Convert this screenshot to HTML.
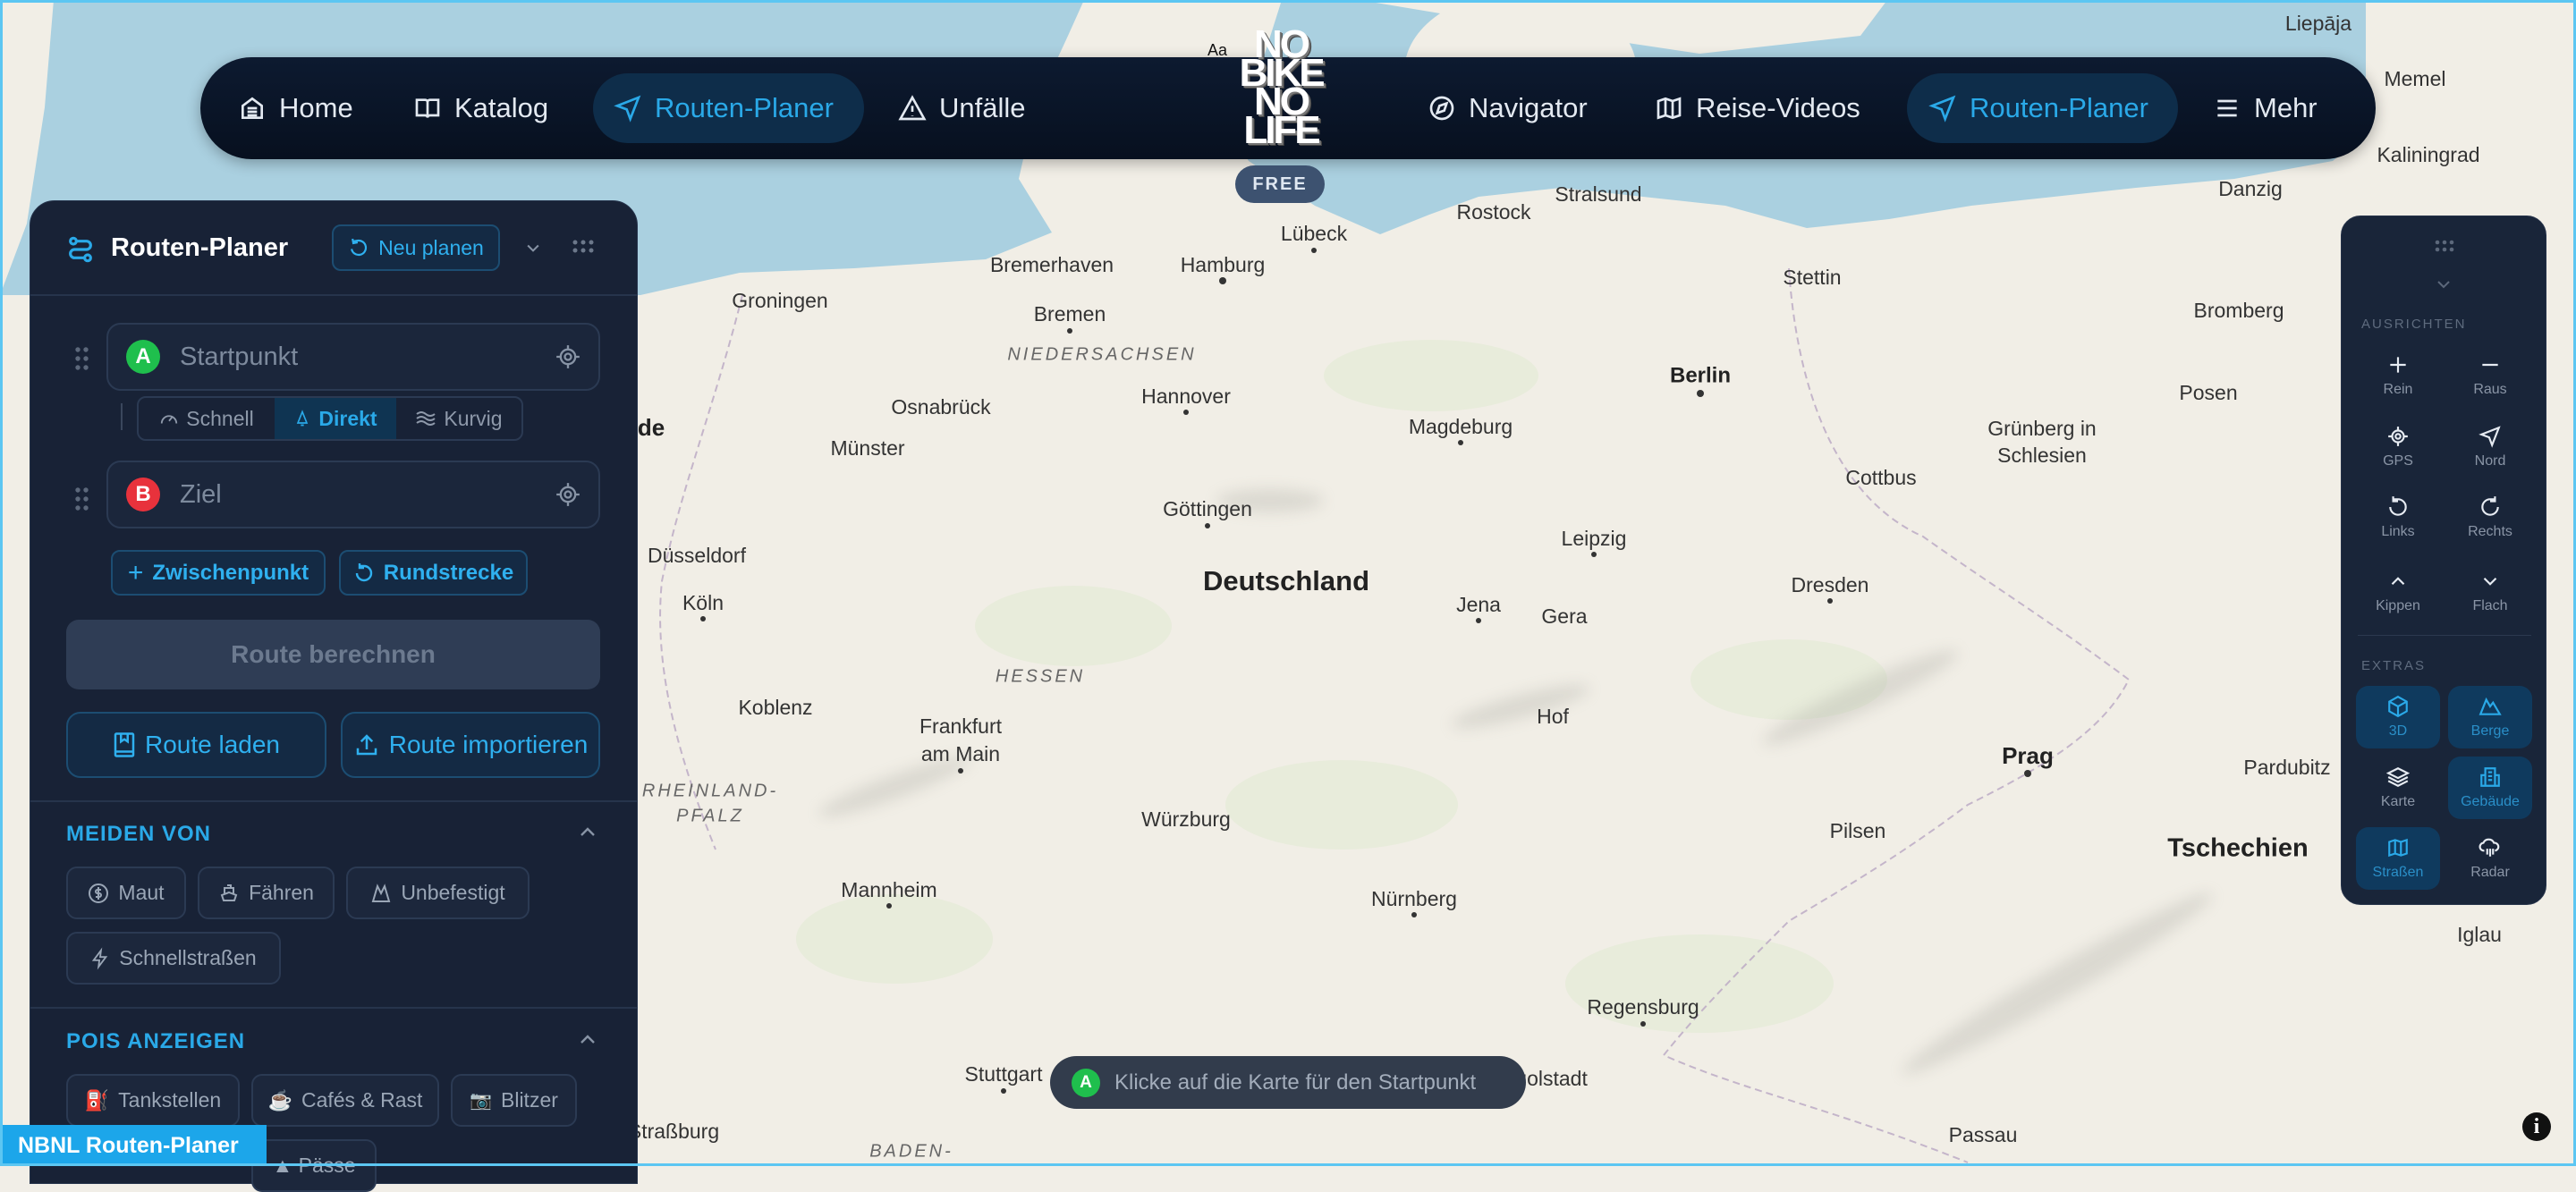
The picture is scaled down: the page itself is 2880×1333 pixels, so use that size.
<!DOCTYPE html>
<html><head><meta charset="utf-8"><style>
*{box-sizing:border-box;margin:0;padding:0}
body{width:2880px;height:1304px;overflow:hidden;position:relative;font-family:"Liberation Sans",sans-serif;background:#f1eee7}
.abs{position:absolute}
svg.map{position:absolute;left:0;top:0}
.nav{left:224px;top:64px;width:2432px;height:114px;border-radius:57px;background:linear-gradient(#0d1a30,#07101f);box-shadow:0 4px 16px rgba(0,0,0,.3)}
.ni{position:absolute;top:0;height:114px;display:flex;align-items:center;gap:14px;color:#e3e9f1;font-size:31px}
.ni svg{width:32px;height:32px;fill:none;stroke:currentColor;stroke-width:2}
.pill{position:absolute;top:18px;height:78px;border-radius:39px;background:#0e2d4a}
.act{color:#2aa9e8}
.panel{left:33px;top:224px;width:680px;height:1100px;border-radius:28px 28px 0 0;background:#182236;border:1px solid #26344c}
.inp{position:absolute;left:85px;width:552px;height:76px;border-radius:16px;border:2px solid #2b3a53;background:#1b263b;display:flex;align-items:center}
.badge{width:38px;height:38px;border-radius:19px;color:#fff;font-weight:bold;font-size:24px;display:flex;align-items:center;justify-content:center;margin-left:20px;margin-right:22px}
.ph{color:#7d8a9d;font-size:29px}
.btn{position:absolute;border:2px solid #1c4d72;background:#142a44;border-radius:10px;color:#2fb0ef;font-size:24px;display:flex;align-items:center;justify-content:center;gap:10px}
.chip{position:absolute;height:59px;border:2px solid #2b3a53;background:#1c273c;border-radius:12px;color:#9aa6b6;font-size:23px;display:flex;align-items:center;justify-content:center;gap:10px}
.sec{position:absolute;left:40px;color:#2aa9e8;font-size:24px;font-weight:bold;letter-spacing:1px}
.hr{position:absolute;left:0;width:678px;height:2px;background:#26344c}
.rp{left:2617px;top:241px;width:230px;height:771px;border-radius:22px;background:#192539;border:1px solid #27344b}
.rl{position:absolute;color:#5e6b7e;font-size:15px;letter-spacing:2px}
.ri{position:absolute;width:94px;text-align:center;color:#8a95a6;font-size:16px}
.ri svg{display:block;margin:0 auto 6px;width:26px;height:26px;fill:none;stroke:#e6ebf2;stroke-width:2}
.tile{position:absolute;width:94px;height:70px;border-radius:14px}
.tile.on{background:#0f3a5e}
.tile.on svg{stroke:#2aa9e8}
.tile.on div{color:#2a8fc8}
</style></head><body>
<svg class="map" width="2880" height="1304" viewBox="0 0 2880 1304">
<rect width="2880" height="1304" fill="#f1eee6"/>
<rect width="2880" height="340" fill="#aad0e0"/>
<path d="M0 330L716 330L827 305L955 300L1102 290L1176 260L1139 200L1157 120L1194 40L1212 0L1433 0L1414 60L1359 120L1396 180L1470 230L1543 262L1598 240L1653 220L1745 210L1837 220L1929 230L2020 255L2112 245L2204 230L2388 210L2498 200L2608 180L2645 150L2645 0L2880 0L2880 1304L0 1304Z" fill="#f1eee6"/>
<path d="M0 0L60 0L50 120L30 250L0 330Z" fill="#f1eee6"/>
<ellipse cx="1700" cy="80" rx="130" ry="90" fill="#f1eee6"/>
<path d="M1520 0L2110 0L2080 40L1900 60L1700 30Z" fill="#f1eee6"/>
<g fill="#e3ebd4" opacity=".6">
<ellipse cx="1200" cy="700" rx="110" ry="45"/><ellipse cx="1500" cy="900" rx="130" ry="50"/><ellipse cx="2000" cy="760" rx="110" ry="45"/><ellipse cx="1900" cy="1100" rx="150" ry="55"/><ellipse cx="1000" cy="1050" rx="110" ry="50"/><ellipse cx="1600" cy="420" rx="120" ry="40"/>
</g>
<defs><filter id="b"><feGaussianBlur stdDeviation="8"/></filter></defs>
<g fill="#a8a8a0" opacity=".3" filter="url(#b)">
<ellipse cx="2080" cy="780" rx="120" ry="16" transform="rotate(-25 2080 780)"/><ellipse cx="1000" cy="880" rx="90" ry="13" transform="rotate(-20 1000 880)"/><ellipse cx="1420" cy="560" rx="60" ry="13"/><ellipse cx="2300" cy="1100" rx="200" ry="18" transform="rotate(-30 2300 1100)"/><ellipse cx="1700" cy="790" rx="80" ry="13" transform="rotate(-15 1700 790)"/>
</g>
<g fill="none" stroke="#b9a6c3" stroke-width="2" stroke-dasharray="8 5" opacity=".8">
<path d="M2000 300C2010 450 2060 560 2150 600C2220 650 2300 700 2380 760C2350 820 2280 860 2200 900C2120 960 2050 1000 2000 1030C1950 1080 1900 1130 1860 1180C1950 1220 2050 1240 2200 1300"/>
<path d="M830 330C800 450 760 550 740 650C730 750 760 850 800 950"/>
</g>
<g font-family="Liberation Sans, sans-serif" font-size="23" fill="#333" text-anchor="middle" dominant-baseline="middle">
<text x="2592" y="28">Liepāja</text><text x="2700" y="90">Memel</text><text x="2715" y="175">Kaliningrad</text><text x="2516" y="213">Danzig</text>
<text x="1787" y="219">Stralsund</text><text x="1670" y="239">Rostock</text><text x="1469" y="263">Lübeck</text><text x="1367" y="298">Hamburg</text><text x="1176" y="298">Bremerhaven</text>
<text x="872" y="338">Groningen</text><text x="1196" y="353">Bremen</text><text x="2026" y="312">Stettin</text><text x="2503" y="349">Bromberg</text>
<text x="1326" y="445">Hannover</text><text x="1052" y="457">Osnabrück</text><text x="2469" y="441">Posen</text><text x="2283" y="481">Grünberg in</text><text x="2283" y="511">Schlesien</text>
<text x="1633" y="479">Magdeburg</text><text x="970" y="503">Münster</text><text x="2103" y="536">Cottbus</text><text x="1350" y="571">Göttingen</text><text x="779" y="623">Düsseldorf</text>
<text x="1782" y="604">Leipzig</text><text x="2046" y="656">Dresden</text><text x="786" y="676">Köln</text><text x="1653" y="678">Jena</text><text x="1749" y="691">Gera</text>
<text x="867" y="793">Koblenz</text><text x="1074" y="814">Frankfurt</text><text x="1074" y="845">am Main</text><text x="1736" y="803">Hof</text><text x="2557" y="860">Pardubitz</text>
<text x="1326" y="918">Würzburg</text><text x="2077" y="931">Pilsen</text><text x="994" y="997">Mannheim</text><text x="1581" y="1007">Nürnberg</text><text x="2772" y="1047">Iglau</text>
<text x="1837" y="1128">Regensburg</text><text x="1122" y="1203">Stuttgart</text><text x="1725" y="1208">Ingolstadt</text><text x="2217" y="1271">Passau</text><text x="753" y="1267">Straßburg</text>
</g>
<g font-family="Liberation Sans, sans-serif" font-weight="bold" fill="#222" text-anchor="middle" dominant-baseline="middle">
<text x="1438" y="652" font-size="31">Deutschland</text><text x="1901" y="421" font-size="24">Berlin</text><text x="2267" y="847" font-size="26">Prag</text><text x="2502" y="950" font-size="29">Tschechien</text><text x="728" y="480" font-size="26">de</text>
</g>
<g font-family="Liberation Sans, sans-serif" font-style="italic" font-size="20" fill="#666" letter-spacing="3" text-anchor="middle" dominant-baseline="middle">
<text x="1232" y="397">NIEDERSACHSEN</text><text x="1163" y="757">HESSEN</text><text x="794" y="885">RHEINLAND-</text><text x="794" y="913">PFALZ</text><text x="1019" y="1288">BADEN-</text>
</g>
<g fill="#333"><circle cx="1367" cy="314" r="4"/><circle cx="1901" cy="440" r="4"/><circle cx="1469" cy="280" r="3"/><circle cx="1326" cy="461" r="3"/><circle cx="1633" cy="495" r="3"/><circle cx="1782" cy="620" r="3"/><circle cx="2046" cy="672" r="3"/><circle cx="1350" cy="588" r="3"/><circle cx="1074" cy="862" r="3"/><circle cx="1581" cy="1023" r="3"/><circle cx="994" cy="1013" r="3"/><circle cx="1837" cy="1145" r="3"/><circle cx="2267" cy="865" r="4"/><circle cx="1122" cy="1220" r="3"/><circle cx="786" cy="692" r="3"/><circle cx="1653" cy="694" r="3"/><circle cx="1196" cy="370" r="3"/></g>
</svg>
<div style="position:absolute;inset:0;border:3px solid #5cc6f2;pointer-events:none;z-index:9"></div>

<div class="abs nav">
 <div class="pill" style="left:439px;width:303px"></div>
 <div class="pill" style="left:1908px;width:303px"></div>
 <div class="ni" style="left:42px"><svg viewBox="0 0 24 24"><path d="M4 10l8-6 8 6v10H4z"/><path d="M8 12h8M8 15h8M8 18h8"/></svg>Home</div>
 <div class="ni" style="left:238px"><svg viewBox="0 0 24 24"><path d="M3 5h7a2 2 0 012 2v13a2 2 0 00-2-2H3zM21 5h-7a2 2 0 00-2 2v13a2 2 0 012-2h7z"/></svg>Katalog</div>
 <div class="ni act" style="left:462px"><svg viewBox="0 0 24 24"><path d="M21 3L3 10l8 3 3 8z"/></svg>Routen-Planer</div>
 <div class="ni" style="left:780px"><svg viewBox="0 0 24 24"><path d="M12 3l10 18H2z"/><path d="M12 10v5M12 18v.5"/></svg>Unfälle</div>
 <div class="ni" style="left:1372px"><svg viewBox="0 0 24 24"><circle cx="12" cy="12" r="9"/><path d="M16 8l-2 6-6 2 2-6z"/></svg>Navigator</div>
 <div class="ni" style="left:1626px"><svg viewBox="0 0 24 24"><path d="M3 6l6-2 6 2 6-2v14l-6 2-6-2-6 2z"/><path d="M9 4v14M15 6v14"/></svg>Reise-Videos</div>
 <div class="ni act" style="left:1932px"><svg viewBox="0 0 24 24"><path d="M21 3L3 10l8 3 3 8z"/></svg>Routen-Planer</div>
 <div class="ni" style="left:2250px"><svg viewBox="0 0 24 24"><path d="M4 6h16M4 12h16M4 18h16"/></svg>Mehr</div>
</div>
<div class="abs" style="left:1380px;top:34px;width:104px;text-align:center;color:#fff;font-family:'Liberation Sans Narrow','Liberation Sans',sans-serif;font-weight:900;font-size:44px;line-height:32px;letter-spacing:-3px;text-shadow:2px 2px 0 #777,3px 3px 0 #444">NO<br>BIKE<br>NO<br>LIFE</div>
<div class="abs" style="left:1350px;top:46px;font-size:18px;color:#111">Aa</div>
<div class="abs" style="left:1381px;top:185px;width:100px;height:42px;border-radius:21px;background:#3d5270;color:#dfe7f1;font-weight:bold;font-size:20px;letter-spacing:2px;display:flex;align-items:center;justify-content:center">FREE</div>

<div class="abs panel">
 <svg style="position:absolute;left:40px;top:38px" width="32" height="32" viewBox="0 0 24 24" fill="none" stroke="#2aa9e8" stroke-width="2.4"><circle cx="6" cy="5" r="2.5"/><circle cx="18" cy="19" r="2.5"/><path d="M9 5h8a3.5 3.5 0 010 7H7a3.5 3.5 0 000 7h8"/></svg>
 <div class="abs" style="left:90px;top:36px;color:#fff;font-size:29px;font-weight:bold">Routen-Planer</div>
 <div class="btn" style="left:337px;top:26px;width:188px;height:52px;font-size:23px"><svg width="24" height="24" viewBox="0 0 24 24" fill="none" stroke="#2fb0ef" stroke-width="2.2"><path d="M4 12a8 8 0 108-8H7M7 1v5h5" transform="rotate(-10 12 12)"/></svg>Neu planen</div>
 <svg style="position:absolute;left:552px;top:42px" width="20" height="20" viewBox="0 0 24 24" fill="none" stroke="#8793a5" stroke-width="2.4"><path d="M5 9l7 7 7-7"/></svg>
 <svg style="position:absolute;left:606px;top:42px" width="26" height="18" fill="#6c788b"><circle cx="3" cy="4" r="2.5"/><circle cx="12" cy="4" r="2.5"/><circle cx="21" cy="4" r="2.5"/><circle cx="3" cy="13" r="2.5"/><circle cx="12" cy="13" r="2.5"/><circle cx="21" cy="13" r="2.5"/></svg>
 <div class="hr" style="top:104px"></div>
 <svg style="position:absolute;left:50px;top:163px" width="16" height="26" fill="#5c687b"><circle cx="3" cy="3" r="2.7"/><circle cx="12" cy="3" r="2.7"/><circle cx="3" cy="13" r="2.7"/><circle cx="12" cy="13" r="2.7"/><circle cx="3" cy="23" r="2.7"/><circle cx="12" cy="23" r="2.7"/></svg>
 <div class="inp" style="top:136px"><div class="badge" style="background:#1fbf4d">A</div><span class="ph">Startpunkt</span>
  <svg style="position:absolute;right:20px" width="28" height="28" viewBox="0 0 24 24" fill="none" stroke="#8793a5" stroke-width="2"><circle cx="12" cy="12" r="7"/><circle cx="12" cy="12" r="3"/><path d="M12 1v4M12 19v4M1 12h4M19 12h4"/></svg></div>
 <div class="abs" style="left:101px;top:226px;width:2px;height:30px;background:#3a475d"></div>
 <div class="abs" style="left:119px;top:218px;width:432px;height:50px;border:2px solid #2b3a53;border-radius:10px;overflow:hidden;display:flex;font-size:23px">
  <div style="width:152px;display:flex;align-items:center;justify-content:center;gap:8px;color:#8e99aa"><svg width="22" height="22" viewBox="0 0 24 24" fill="none" stroke="#8e99aa" stroke-width="2"><path d="M3 18a9 9 0 0118 0M12 15l4-5"/></svg>Schnell</div>
  <div style="width:136px;background:#0f3452;display:flex;align-items:center;justify-content:center;gap:8px;color:#2aa9e8;font-weight:bold"><svg width="20" height="22" viewBox="0 0 24 24" fill="none" stroke="#2aa9e8" stroke-width="2"><path d="M12 3L6 18h12zM10 21h4"/></svg>Direkt</div>
  <div style="flex:1;display:flex;align-items:center;justify-content:center;gap:8px;color:#8e99aa"><svg width="24" height="20" viewBox="0 0 24 20" fill="none" stroke="#8e99aa" stroke-width="2"><path d="M2 5q5-4 10 0t10 0M2 10q5-4 10 0t10 0M2 15q5-4 10 0t10 0"/></svg>Kurvig</div>
 </div>
 <svg style="position:absolute;left:50px;top:320px" width="16" height="26" fill="#5c687b"><circle cx="3" cy="3" r="2.7"/><circle cx="12" cy="3" r="2.7"/><circle cx="3" cy="13" r="2.7"/><circle cx="12" cy="13" r="2.7"/><circle cx="3" cy="23" r="2.7"/><circle cx="12" cy="23" r="2.7"/></svg>
 <div class="inp" style="top:290px"><div class="badge" style="background:#e8323c">B</div><span class="ph">Ziel</span>
  <svg style="position:absolute;right:20px" width="28" height="28" viewBox="0 0 24 24" fill="none" stroke="#8793a5" stroke-width="2"><circle cx="12" cy="12" r="7"/><circle cx="12" cy="12" r="3"/><path d="M12 1v4M12 19v4M1 12h4M19 12h4"/></svg></div>
 <div class="btn" style="left:90px;top:390px;width:240px;height:51px;font-weight:bold"><span style="font-size:30px;font-weight:normal">+</span>Zwischenpunkt</div>
 <div class="btn" style="left:345px;top:390px;width:211px;height:51px;font-weight:bold"><svg width="24" height="24" viewBox="0 0 24 24" fill="none" stroke="#2fb0ef" stroke-width="2.4"><path d="M4 12a8 8 0 108-8H7M7 1v5h5"/></svg>Rundstrecke</div>
 <div class="abs" style="left:40px;top:468px;width:597px;height:78px;border-radius:14px;background:#2f3d55;color:#6c7a8f;font-size:28px;font-weight:bold;display:flex;align-items:center;justify-content:center">Route berechnen</div>
 <div class="btn" style="left:40px;top:571px;width:291px;height:74px;border-radius:16px;font-size:28px"><svg width="26" height="30" viewBox="0 0 20 24" fill="none" stroke="#2fb0ef" stroke-width="2"><rect x="2" y="2" width="16" height="20" rx="1"/><path d="M2 18h16M7 2v7l3-2 3 2V2"/></svg>Route laden</div>
 <div class="btn" style="left:347px;top:571px;width:290px;height:74px;border-radius:16px;font-size:28px"><svg width="30" height="30" viewBox="0 0 24 24" fill="none" stroke="#2fb0ef" stroke-width="2"><path d="M4 15v5h16v-5M12 16V4M7 9l5-5 5 5"/></svg>Route importieren</div>
 <div class="hr" style="top:670px"></div>
 <div class="sec" style="top:694px">MEIDEN VON</div>
 <svg style="position:absolute;left:613px;top:698px" width="20" height="14" viewBox="0 0 20 14" fill="none" stroke="#8793a5" stroke-width="2.4"><path d="M3 11l7-7 7 7"/></svg>
 <div class="chip" style="left:40px;top:744px;width:134px"><svg width="24" height="24" viewBox="0 0 24 24" fill="none" stroke="#9aa6b6" stroke-width="2"><circle cx="12" cy="12" r="10"/><path d="M15 8h-4a2 2 0 000 4h2a2 2 0 010 4H9M12 5v14"/></svg>Maut</div>
 <div class="chip" style="left:187px;top:744px;width:153px"><svg width="24" height="26" viewBox="0 0 24 24" fill="none" stroke="#9aa6b6" stroke-width="2"><path d="M4 14l8-3 8 3-2 6H6zM7 12V6h10v6M10 3h4v3"/></svg>Fähren</div>
 <div class="chip" style="left:353px;top:744px;width:205px"><svg width="24" height="24" viewBox="0 0 24 24" fill="none" stroke="#9aa6b6" stroke-width="2"><path d="M3 21L8 4l4 8 4-8 5 17z"/></svg>Unbefestigt</div>
 <div class="chip" style="left:40px;top:817px;width:240px"><svg width="22" height="26" viewBox="0 0 24 24" fill="none" stroke="#9aa6b6" stroke-width="2"><path d="M13 2L4 14h7l-1 8 9-12h-7z"/></svg>Schnellstraßen</div>
 <div class="hr" style="top:901px"></div>
 <div class="sec" style="top:926px">POIS ANZEIGEN</div>
 <svg style="position:absolute;left:613px;top:930px" width="20" height="14" viewBox="0 0 20 14" fill="none" stroke="#8793a5" stroke-width="2.4"><path d="M3 11l7-7 7 7"/></svg>
 <div class="chip" style="left:40px;top:976px;width:194px"><span style="color:#e33;font-size:22px">⛽</span>Tankstellen</div>
 <div class="chip" style="left:247px;top:976px;width:210px"><span style="font-size:22px">☕</span>Cafés &amp; Rast</div>
 <div class="chip" style="left:470px;top:976px;width:141px"><span style="font-size:20px">📷</span>Blitzer</div>
 <div class="chip" style="left:247px;top:1049px;width:140px">▲ Pässe</div>
</div>
<div class="abs" style="left:0;top:1258px;width:298px;height:46px;background:#1ca6ea;color:#fff;font-weight:bold;font-size:25px;display:flex;align-items:center;padding-left:20px;z-index:5">NBNL Routen-Planer</div>

<div class="abs rp">
 <svg style="position:absolute;left:104px;top:26px" width="22" height="14" fill="#5c687b"><circle cx="3" cy="3" r="2.3"/><circle cx="11" cy="3" r="2.3"/><circle cx="19" cy="3" r="2.3"/><circle cx="3" cy="11" r="2.3"/><circle cx="11" cy="11" r="2.3"/><circle cx="19" cy="11" r="2.3"/></svg>
 <svg style="position:absolute;left:106px;top:70px" width="16" height="12" viewBox="0 0 16 12" fill="none" stroke="#5c687b" stroke-width="2"><path d="M2 3l6 6 6-6"/></svg>
 <div class="rl" style="left:22px;top:112px">AUSRICHTEN</div>
 <div class="ri" style="left:16px;top:153px"><svg viewBox="0 0 24 24"><path d="M12 4v16M4 12h16"/></svg>Rein</div>
 <div class="ri" style="left:119px;top:153px"><svg viewBox="0 0 24 24"><path d="M4 12h16"/></svg>Raus</div>
 <div class="ri" style="left:16px;top:233px"><svg viewBox="0 0 24 24"><circle cx="12" cy="12" r="6"/><circle cx="12" cy="12" r="2.5"/><path d="M12 2v4M12 18v4M2 12h4M18 12h4"/></svg>GPS</div>
 <div class="ri" style="left:119px;top:233px"><svg viewBox="0 0 24 24"><path d="M21 3L3 10l8 3 3 8z"/></svg>Nord</div>
 <div class="ri" style="left:16px;top:312px"><svg viewBox="0 0 24 24"><path d="M4 12a8 8 0 108-8H7M7 1v5h5"/></svg>Links</div>
 <div class="ri" style="left:119px;top:312px"><svg viewBox="0 0 24 24"><path d="M20 12a8 8 0 11-8-8h5M17 1v5h-5"/></svg>Rechts</div>
 <div class="ri" style="left:16px;top:395px"><svg viewBox="0 0 24 24"><path d="M6 15l6-6 6 6"/></svg>Kippen</div>
 <div class="ri" style="left:119px;top:395px"><svg viewBox="0 0 24 24"><path d="M6 9l6 6 6-6"/></svg>Flach</div>
 <div class="abs" style="left:18px;top:468px;width:194px;height:1px;background:#2c3950"></div>
 <div class="rl" style="left:22px;top:494px">EXTRAS</div>
 <div class="tile on ri" style="left:16px;top:525px;padding-top:10px"><svg viewBox="0 0 24 24"><path d="M12 2l9 5v10l-9 5-9-5V7zM3 7l9 5 9-5M12 12v10"/></svg><div>3D</div></div>
 <div class="tile on ri" style="left:119px;top:525px;padding-top:10px"><svg viewBox="0 0 24 24"><path d="M2 20L8 5l4 7 3-4 7 12z"/></svg><div>Berge</div></div>
 <div class="tile ri" style="left:16px;top:604px;padding-top:10px"><svg viewBox="0 0 24 24"><path d="M12 3l10 5-10 5L2 8zM2 12l10 5 10-5M2 16l10 5 10-5"/></svg><div>Karte</div></div>
 <div class="tile on ri" style="left:119px;top:604px;padding-top:10px"><svg viewBox="0 0 24 24"><path d="M7 21V3h10v18M3 21V10h4M17 10h4v11M2 21h20M10 7h4M10 11h4M10 15h4"/></svg><div>Gebäude</div></div>
 <div class="tile on ri" style="left:16px;top:683px;padding-top:10px"><svg viewBox="0 0 24 24"><path d="M3 6l6-2 6 2 6-2v14l-6 2-6-2-6 2z"/><path d="M9 4v14M15 6v14"/></svg><div>Straßen</div></div>
 <div class="tile ri" style="left:119px;top:683px;padding-top:10px"><svg viewBox="0 0 24 24"><path d="M6 15a4 4 0 01-1-8 6 6 0 0111 0 4 4 0 011 8M9 13v6M12 13v8M15 13v6"/></svg><div>Radar</div></div>
</div>

<div class="abs" style="left:1174px;top:1181px;width:532px;height:59px;border-radius:30px;background:#323c4c;display:flex;align-items:center;gap:16px;padding-left:24px">
 <div style="width:32px;height:32px;border-radius:16px;background:#1fbf4d;color:#fff;font-weight:bold;font-size:19px;display:flex;align-items:center;justify-content:center">A</div>
 <span style="color:#a3adbb;font-size:24px">Klicke auf die Karte für den Startpunkt</span>
</div>
<div class="abs" style="left:2820px;top:1244px;width:32px;height:32px;border-radius:16px;background:#111;color:#fff;font-weight:bold;font-family:'Liberation Serif',serif;font-size:24px;display:flex;align-items:center;justify-content:center">i</div>
</body></html>
